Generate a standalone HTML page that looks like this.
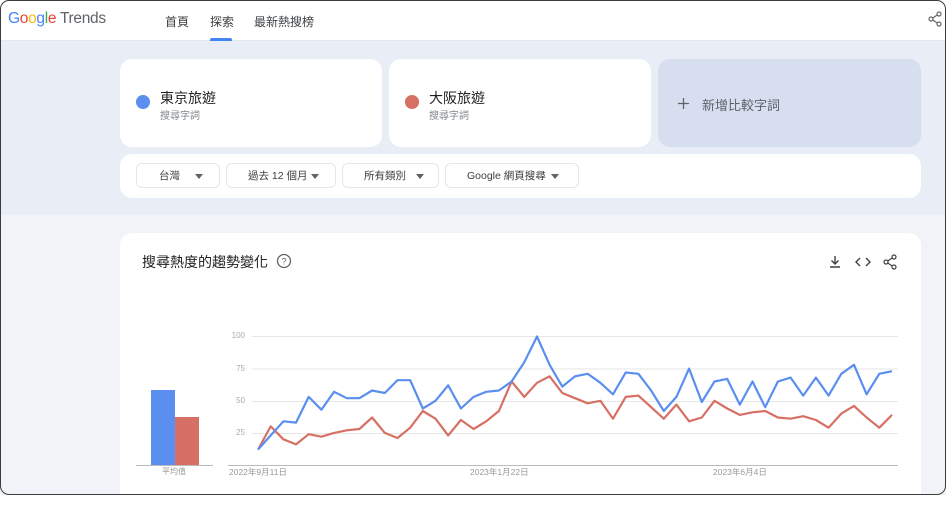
<!DOCTYPE html>
<html><head><meta charset="utf-8"><style>
*{box-sizing:border-box;margin:0;padding:0}
body{width:946px;height:495px;overflow:hidden;background:#fff;font-family:"Liberation Sans","Noto Sans CJK TC",sans-serif;position:relative}
.frame{position:absolute;left:0;top:0;width:946px;height:495px;border:1.5px solid #3c3c3c;border-radius:9px;pointer-events:none;z-index:10}
.hdr{position:absolute;left:0;top:0;width:946px;height:41px;background:#fff;border-bottom:1px solid #e3e6ec}
.band{position:absolute;left:0;top:41px;width:946px;height:174px;background:#e9edf6}
.low{position:absolute;left:0;top:215px;width:946px;height:280px;background:#f1f3f8}
.logo{position:absolute;left:8px;top:10px;font-size:15.5px;letter-spacing:-0.3px}
.nav{position:absolute;top:13px;font-size:12px;color:#3c4043}
.card{position:absolute;background:#fff;border-radius:12px}
.dot{position:absolute;width:14px;height:14px;border-radius:50%}
.t1{position:absolute;font-size:14px;color:#202124}
.t2{position:absolute;font-size:10px;color:#80868b}
.chip{position:absolute;top:163px;height:25px;border:1px solid #e3e6ea;border-radius:6px;font-size:10.5px;color:#3c4043;line-height:24px}
.chip i{position:absolute;top:10px;width:0;height:0;border-left:4px solid transparent;border-right:4px solid transparent;border-top:5px solid #5f6368}
.yl{position:absolute;font-size:8px;color:#aaa;text-align:right;width:30px}
.xl{position:absolute;font-size:8.5px;color:#999;top:466px}
</style></head><body>
<div class="hdr"></div>
<div class="logo"><span style="color:#4285f4">G</span><span style="color:#ea4335">o</span><span style="color:#fbbc05">o</span><span style="color:#4285f4">g</span><span style="color:#34a853">l</span><span style="color:#ea4335">e</span><span style="color:#5f6368"> Trends</span></div>
<div class="nav" style="left:165px">首頁</div>
<div class="nav" style="left:210px">探索</div>
<div style="position:absolute;left:210px;top:38px;width:22px;height:3px;background:#4285f4;border-radius:2px 2px 0 0"></div>
<div class="nav" style="left:254px">最新熱搜榜</div>
<svg style="position:absolute;left:928px;top:11px" width="14" height="16" viewBox="0 0 14 16"><circle cx="11" cy="3" r="2" fill="none" stroke="#666" stroke-width="1.2"/><circle cx="3" cy="8" r="2" fill="none" stroke="#666" stroke-width="1.2"/><circle cx="11" cy="13" r="2" fill="none" stroke="#666" stroke-width="1.2"/><path d="M4.8 7 9.2 4M4.8 9 9.2 12" stroke="#666" stroke-width="1.2"/></svg>
<div class="band"></div>
<div class="low"></div>

<div class="card" style="left:120px;top:59px;width:262px;height:88px"></div>
<div class="dot" style="left:136px;top:95px;background:#5a8ff0"></div>
<div class="t1" style="left:160px;top:88px">東京旅遊</div>
<div class="t2" style="left:160px;top:107px">搜尋字詞</div>
<div class="card" style="left:389px;top:59px;width:262px;height:88px"></div>
<div class="dot" style="left:405px;top:95px;background:#d67064"></div>
<div class="t1" style="left:429px;top:88px">大阪旅遊</div>
<div class="t2" style="left:429px;top:107px">搜尋字詞</div>
<div class="card" style="left:658px;top:59px;width:263px;height:88px;background:#d6def0"></div>
<svg style="position:absolute;left:678px;top:98px" width="11" height="11"><path d="M5.5 0v11M0 5.5h11" stroke="#5f6368" stroke-width="1.3"/></svg>
<div style="position:absolute;left:702px;top:95px;font-size:13px;color:#5f6368">新增比較字詞</div>

<div class="card" style="left:120px;top:154px;width:801px;height:44px"></div>
<div class="chip" style="left:136px;width:84px"><span style="position:absolute;left:22px">台灣</span><i style="left:58px"></i></div>
<div class="chip" style="left:226px;width:110px"><span style="position:absolute;left:21px">過去 12 個月</span><i style="left:84px"></i></div>
<div class="chip" style="left:342px;width:97px"><span style="position:absolute;left:21px">所有類別</span><i style="left:73px"></i></div>
<div class="chip" style="left:445px;width:134px"><span style="position:absolute;left:21px">Google 網頁搜尋</span><i style="left:105px"></i></div>

<div class="card" style="left:120px;top:233px;width:801px;height:280px"></div>
<div style="position:absolute;left:142px;top:252px;font-size:14px;color:#202124">搜尋熱度的趨勢變化</div>
<svg style="position:absolute;left:276px;top:253px" width="16" height="16"><circle cx="8" cy="8" r="6.5" fill="none" stroke="#5f6368" stroke-width="1.3"/><text x="8" y="11.5" font-size="9" text-anchor="middle" fill="#5f6368" font-family="Liberation Sans">?</text></svg>
<svg style="position:absolute;left:827px;top:254px" width="72" height="16"><path d="M8 2v8M4.5 6.5 8 10l3.5-3.5M3 13h10" stroke="#3c4043" stroke-width="1.4" fill="none"/><path d="M33 4 29 8l4 4M39 4l4 4-4 4" stroke="#3c4043" stroke-width="1.4" fill="none"/><circle cx="67" cy="3" r="2" fill="none" stroke="#3c4043" stroke-width="1.2"/><circle cx="59" cy="8" r="2" fill="none" stroke="#3c4043" stroke-width="1.2"/><circle cx="67" cy="13" r="2" fill="none" stroke="#3c4043" stroke-width="1.2"/><path d="M60.8 7 65.2 4M60.8 9 65.2 12" stroke="#3c4043" stroke-width="1.2"/></svg>

<div style="position:absolute;left:151px;top:390px;width:24px;height:75px;background:#5a8ff0"></div>
<div style="position:absolute;left:175px;top:417px;width:24px;height:48px;background:#d67064"></div>
<div style="position:absolute;left:136px;top:465px;width:77px;height:1px;background:#bbb"></div>
<div style="position:absolute;left:162px;top:466px;font-size:8px;color:#999">平均值</div>

<div class="yl" style="left:215px;top:331px">100</div>
<div class="yl" style="left:215px;top:364px">75</div>
<div class="yl" style="left:215px;top:396px">50</div>
<div class="yl" style="left:215px;top:428px">25</div>
<div class="xl" style="left:229px">2022年9月11日</div>
<div class="xl" style="left:470px">2023年1月22日</div>
<div class="xl" style="left:713px">2023年6月4日</div>

<svg style="position:absolute;left:0;top:0" width="946" height="495">
<g stroke="#e6e6e6" stroke-width="1"><line x1="252" x2="898" y1="336.5" y2="336.5"/><line x1="252" x2="898" y1="369" y2="369"/><line x1="252" x2="898" y1="401.5" y2="401.5"/><line x1="252" x2="898" y1="433.5" y2="433.5"/></g>
<line x1="228" x2="898" y1="465.5" y2="465.5" stroke="#bbb"/>
<polyline id="r" fill="none" stroke="#d67064" stroke-width="2.2" stroke-linejoin="round"/>
<polyline id="b" fill="none" stroke="#5a8ff0" stroke-width="2.2" stroke-linejoin="round"/>
</svg>
<div class="frame"></div>
<script>
var B=[12,23,34,33,53,43,57,52,52,58,56,66,66,44,50,62,44,53,57,58,65,80,100,78,61,69,71,64,55,72,71,58,42,53,75,49,65,67,47,65,45,65,68,54,68,54,71,78,55,71,73];
var R=[12,30,20,16,24,22,25,27,28,37,25,21,29,42,36,23,35,28,34,42,65,53,64,69,56,52,48,50,36,53,54,45,36,47,34,37,50,44,39,41,42,37,36,38,35,29,40,46,37,29,39];
function p(a){return a.map(function(v,i){return (258+i*12.68).toFixed(1)+","+(465-v*1.285).toFixed(1)}).join(" ")}
document.getElementById("b").setAttribute("points",p(B));
document.getElementById("r").setAttribute("points",p(R));
</script>
</body></html>
